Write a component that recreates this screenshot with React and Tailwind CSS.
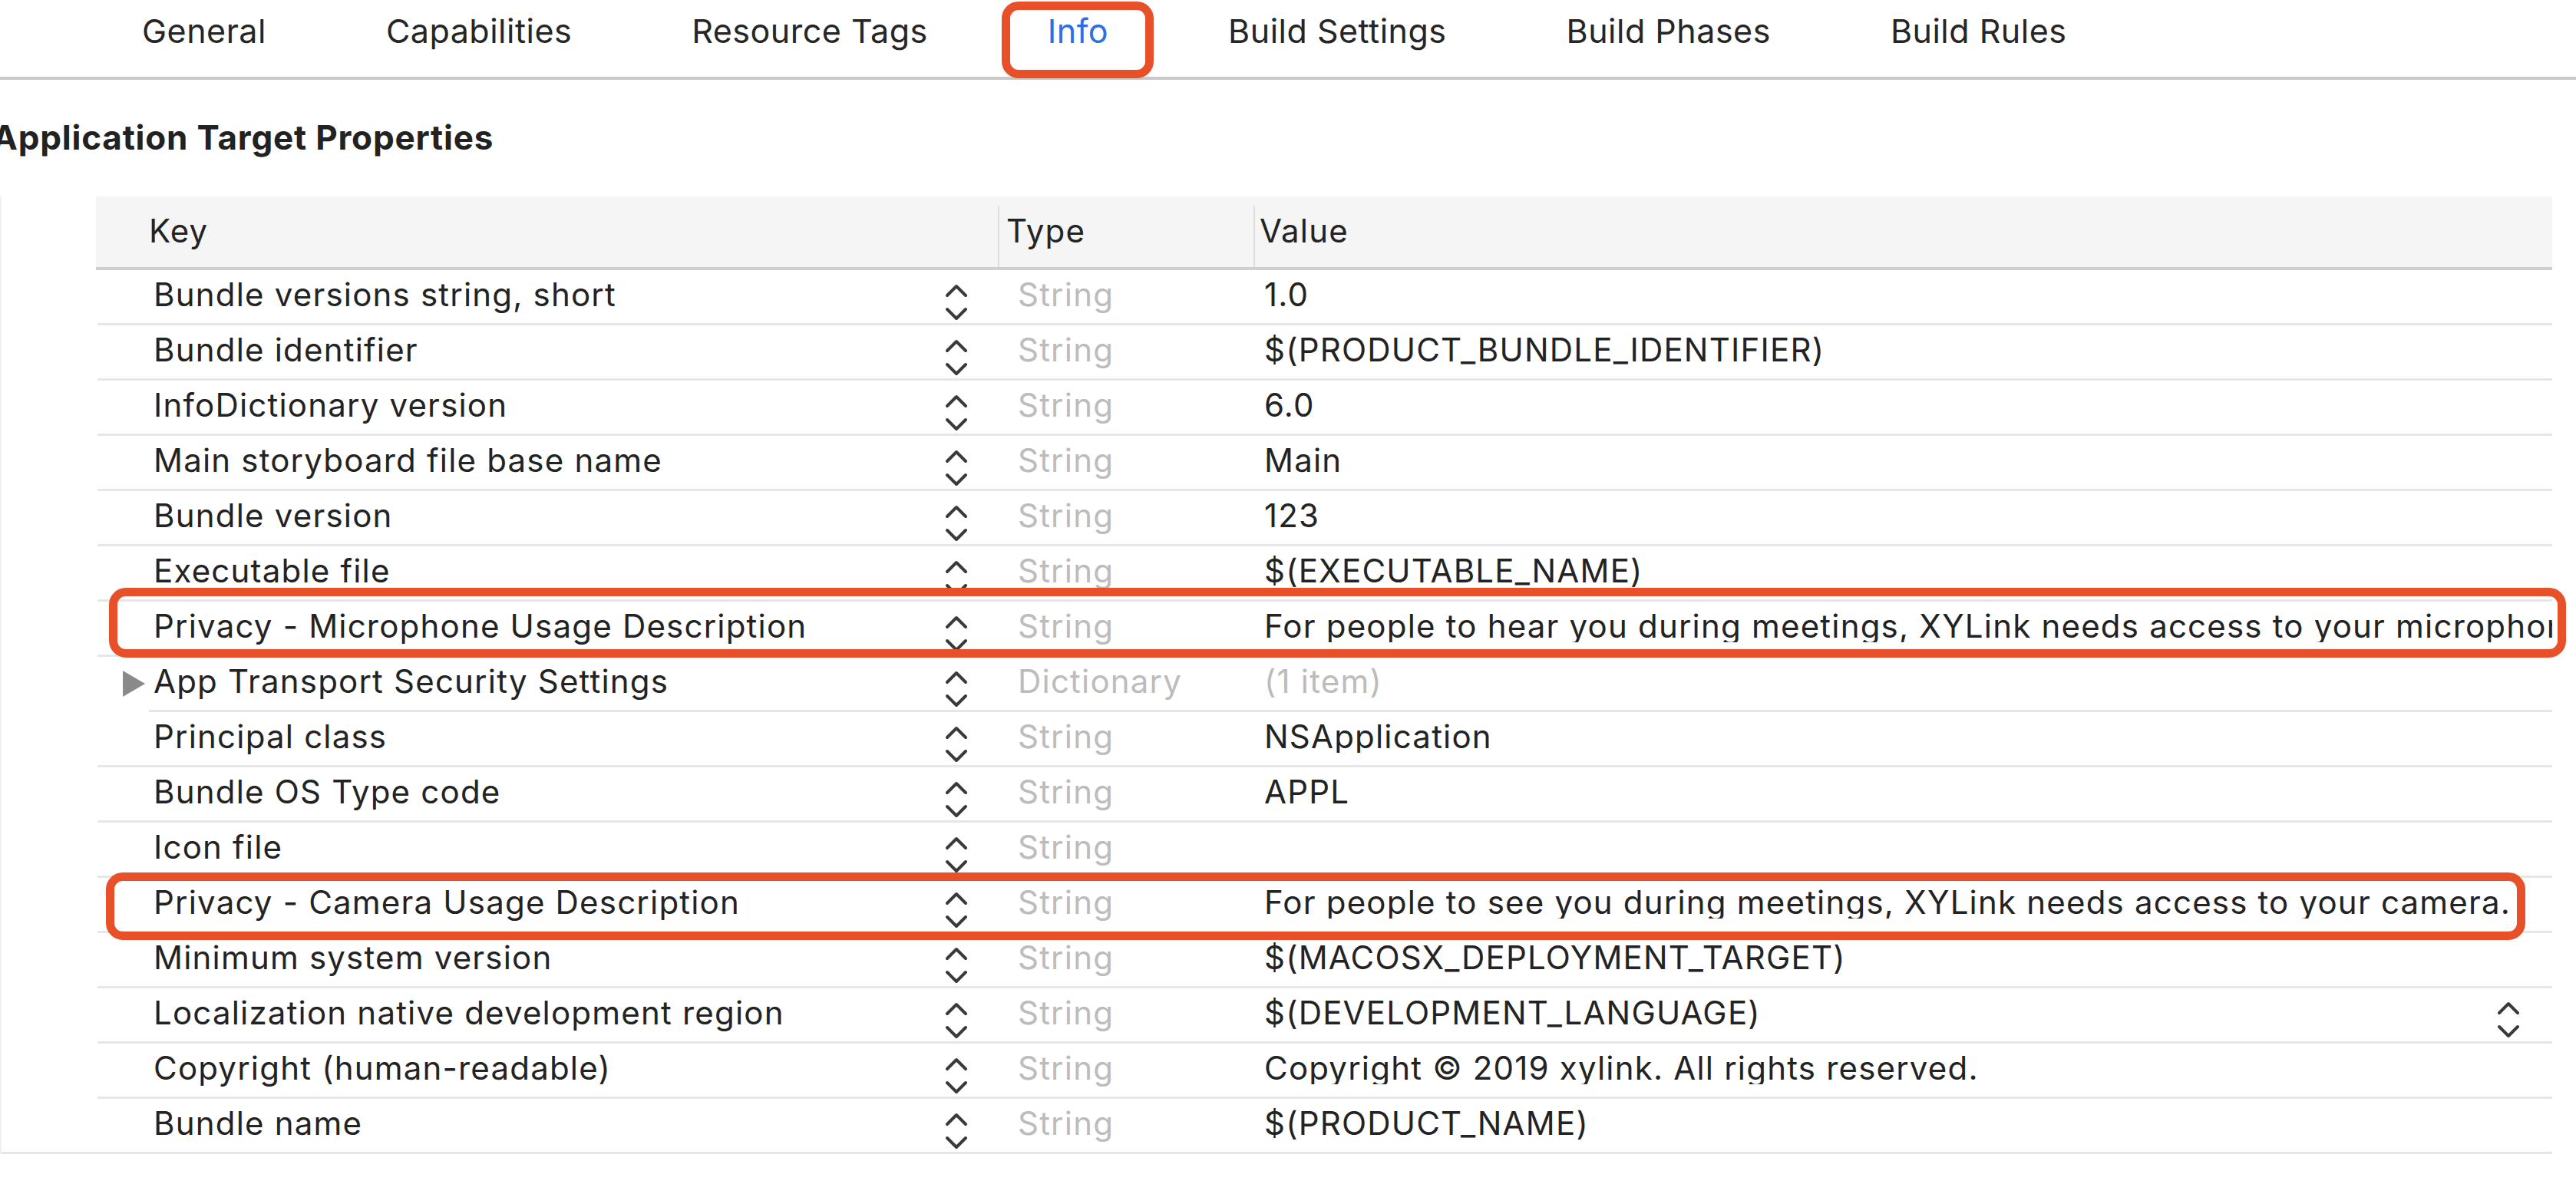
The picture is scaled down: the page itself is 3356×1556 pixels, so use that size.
import React from 'react'

const tabs = ['General', 'Capabilities', 'Resource Tags', 'Info', 'Build Settings', 'Build Phases', 'Build Rules']

const rows = [
  { key: 'Bundle versions string, short', type: 'String', value: '1.0' },
  { key: 'Bundle identifier', type: 'String', value: '$(PRODUCT_BUNDLE_IDENTIFIER)' },
  { key: 'InfoDictionary version', type: 'String', value: '6.0' },
  { key: 'Main storyboard file base name', type: 'String', value: 'Main' },
  { key: 'Bundle version', type: 'String', value: '123' },
  { key: 'Executable file', type: 'String', value: '$(EXECUTABLE_NAME)' },
  { key: 'Privacy - Microphone Usage Description', type: 'String', value: 'For people to hear you during meetings, XYLink needs access to your microphone.' },
  { key: 'App Transport Security Settings', type: 'Dictionary', value: '(1 item)', dict: true },
  { key: 'Principal class', type: 'String', value: 'NSApplication' },
  { key: 'Bundle OS Type code', type: 'String', value: 'APPL' },
  { key: 'Icon file', type: 'String', value: '' },
  { key: 'Privacy - Camera Usage Description', type: 'String', value: 'For people to see you during meetings, XYLink needs access to your camera.' },
  { key: 'Minimum system version', type: 'String', value: '$(MACOSX_DEPLOYMENT_TARGET)' },
  { key: 'Localization native development region', type: 'String', value: '$(DEVELOPMENT_LANGUAGE)', popup: true },
  { key: 'Copyright (human-readable)', type: 'String', value: 'Copyright © 2019 xylink. All rights reserved.' },
  { key: 'Bundle name', type: 'String', value: '$(PRODUCT_NAME)' },
]

function Stepper() {
  return (
    <svg width="28" height="48" viewBox="0 0 28 48" className="shrink-0">
      <path d="M2 15 L14 3 L26 15" fill="none" stroke="#3a3a3a" strokeWidth="4" strokeLinecap="round" strokeLinejoin="round" />
      <path d="M2 33 L14 45 L26 33" fill="none" stroke="#3a3a3a" strokeWidth="4" strokeLinecap="round" strokeLinejoin="round" />
    </svg>
  )
}

function Row({ row, last, idx }) {
  const sepClass = last ? 'ml-0 w-[3323px]' : idx === 7 ? 'ml-[192px] w-[3131px]' : 'ml-[125px] w-[3198px]'
  return (
    <div>
      <div className="ml-[125px] w-[3198px] h-[69px] flex">
        {/* key column */}
        <div className="w-[1174px] flex items-center">
          <div className="ml-[33px] w-[29px] h-[34px] shrink-0">
            {row.dict && (
              <svg width="29" height="34" viewBox="0 0 29 34">
                <polygon points="0,0 29,17 0,34" fill="#8a8a8a" />
              </svg>
            )}
          </div>
          <span className="ml-[11px] flex-1 whitespace-nowrap leading-none mb-[6px]">{row.key}</span>
          <div className="self-start mt-[18px] mr-[41px]">
            <Stepper />
          </div>
        </div>
        {/* type column */}
        <div className="w-[333px] pl-[25px] flex items-center">
          <span className="text-[#bcbcbc] leading-none mb-[6px]">{row.type}</span>
        </div>
        {/* value column */}
        <div className="flex-1 min-w-0 pl-[13px] flex items-center">
          <span className={`flex-1 min-w-0 overflow-hidden whitespace-nowrap leading-none mb-[6px] pr-[6px] ${row.dict ? 'text-[#bcbcbc]' : ''}`}>
            {row.value}
          </span>
          {row.popup && (
            <div className="self-start mt-[17px] mr-[43px]">
              <Stepper />
            </div>
          )}
        </div>
      </div>
      <div className={`h-[3px] bg-[#e6e6e6] ${sepClass}`} />
    </div>
  )
}

export default function App() {
  return (
    <div className="relative w-[3356px] h-[1556px] bg-white overflow-hidden text-[#232323] font-['Inter',sans-serif] text-[42px] tracking-[1.2px]">
      {/* tab bar */}
      <div className="h-[104px] border-b-4 border-[#c8c8c8] flex items-start pl-[185px] gap-[156px] pt-[19px]">
        {tabs.map((t) => (
          <span key={t} className={`text-[43px] leading-none tracking-[0.5px] ${t === 'Info' ? 'text-[#2d6ee4]' : 'text-[#262626]'}`}>
            {t}
          </span>
        ))}
      </div>

      {/* section title */}
      <div className="mt-[53px] -ml-[10px] text-[44px] font-bold leading-none tracking-[0.8px] text-[#222]">
        Application Target Properties
      </div>

      {/* table */}
      <div className="mt-[55px] border-l-2 border-[#f0f0f0]">
        <div className="ml-[123px] w-[3200px] h-[96px] bg-[#f5f5f5] border-b-4 border-[#cfcfcf] flex">
          <div className="w-[1175px] flex items-center pl-[69px]">
            <span className="leading-none mb-[2px]">Key</span>
          </div>
          <div className="w-[333px] mt-[12px] border-l-2 border-[#dedede] flex items-center pl-[9px]">
            <span className="leading-none mb-[14px]">Type</span>
          </div>
          <div className="flex-1 mt-[12px] border-l-2 border-[#dedede] flex items-center pl-[6px]">
            <span className="leading-none mb-[14px]">Value</span>
          </div>
        </div>
        {rows.map((r, i) => (
          <Row key={r.key} row={r} idx={i} last={i === rows.length - 1} />
        ))}
      </div>

      {/* annotation boxes */}
      <div className="absolute left-[1305px] top-[2px] w-[198px] h-[100px] border-[11px] border-[#e8502a] rounded-[22px]" />
      <div className="absolute left-[142px] top-[766px] w-[3201px] h-[91px] border-[11px] border-[#e8502a] rounded-[22px]" />
      <div className="absolute left-[138px] top-[1137px] w-[3152px] h-[88px] border-[11px] border-[#e8502a] rounded-[22px]" />
    </div>
  )
}
